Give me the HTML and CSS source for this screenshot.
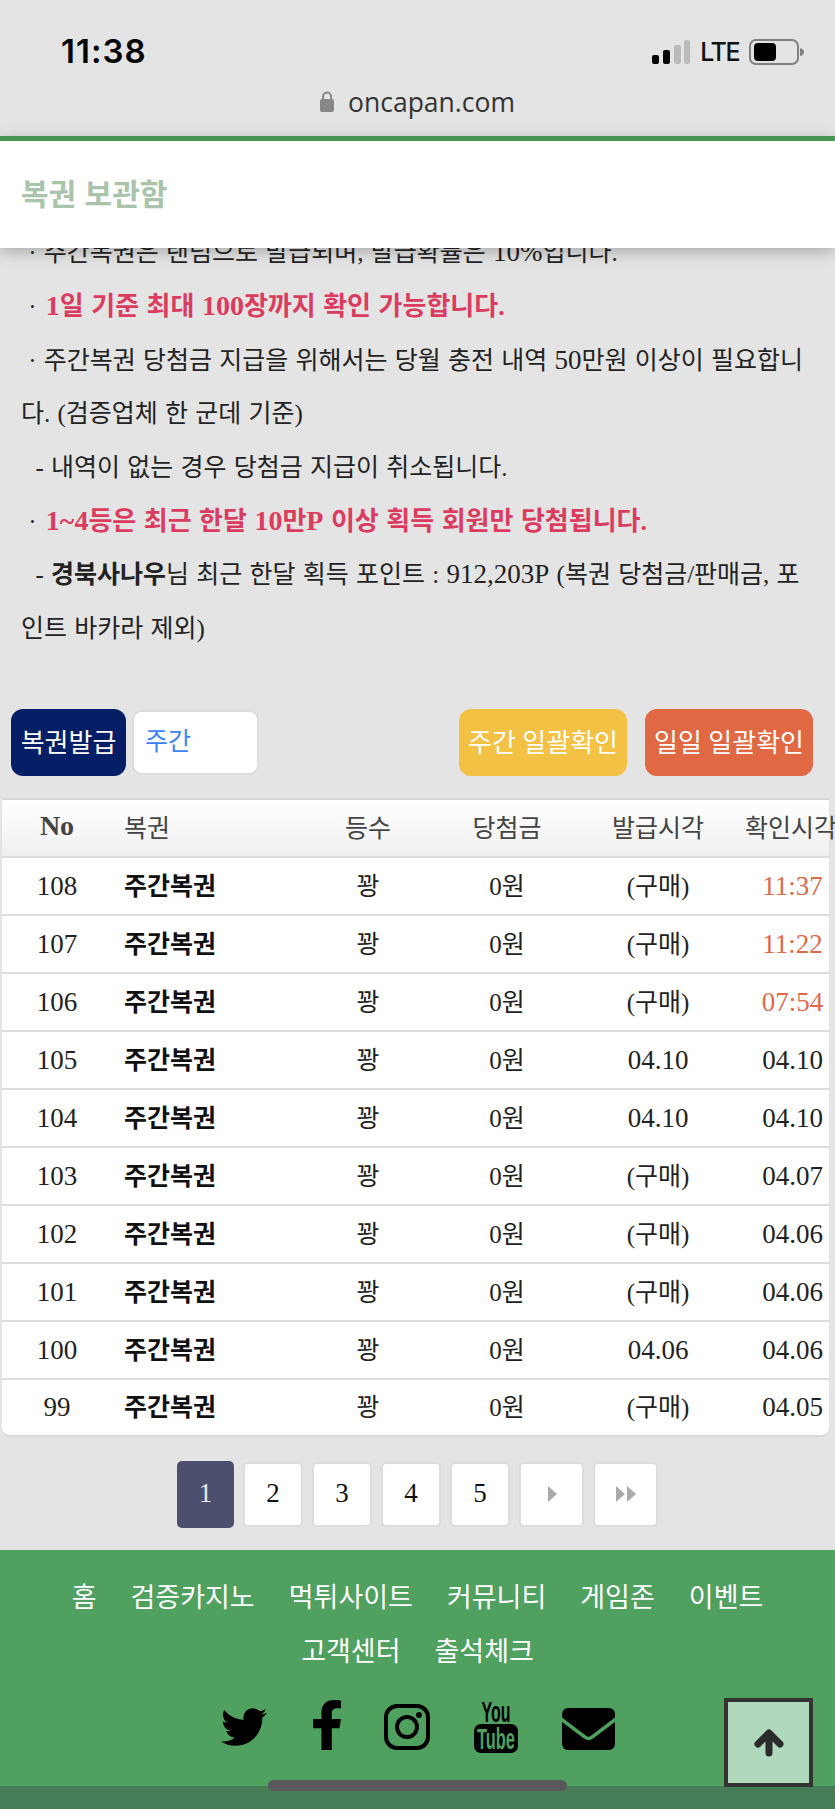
FILE: index.html
```html
<!DOCTYPE html>
<html lang="ko">
    <head>
        <meta charset="UTF-8">
        <meta name="viewport" content="width=device-width, initial-scale=1.0">
        <title>복권 보관함</title>
        <link rel="stylesheet" href="styles.css">
    </head>
    <body>
        <div class="status-bar">
            <span class="clock">11:38</span>
            <div class="status-right">
                <svg class="signal" width="38" height="24" viewBox="0 0 38 24">
                    <rect x="0" y="15" width="7" height="9" rx="2" fill="#000"/>
                    <rect x="11" y="10" width="7" height="14" rx="2" fill="#000"/>
                    <rect x="22" y="5" width="7" height="19" rx="2" fill="#bbb"/>
                    <rect x="32" y="0" width="6" height="24" rx="2" fill="#bbb"/>
                </svg>
                <span class="lte">LTE</span>
                <svg class="battery" width="56" height="26" viewBox="0 0 56 26">
                    <rect x="1" y="1" width="48" height="24" rx="6" fill="none" stroke="#808080" stroke-width="2"/>
                    <rect x="5" y="4" width="22" height="18" rx="4" fill="#000"/>
                    <path d="M51 9 q4 1 4 4 q0 3 -4 4z" fill="#808080"/>
                </svg>
            </div>
        </div>
        <div class="address-bar">
            <svg width="14" height="21" viewBox="0 0 14 21">
                <path d="M3 9V5.5a4 4 0 0 1 8 0V9" fill="none" stroke="#888" stroke-width="2"/>
                <rect x="0" y="8" width="14" height="13" rx="2" fill="#888"/>
            </svg>
            <span>oncapan.com</span>
        </div>

        <header class="top-header">복권 보관함</header>

        <div class="notice">
            <p>&nbsp;· 주간복권은 랜덤으로 발급되며, 발급확률은 <span class="num">10%</span>입니다.</p>
            <p>&nbsp;· <b class="red"><span class="num">1</span>일 기준 최대 <span class="num">100</span>장까지 확인 가능합니다.</b></p>
            <p>&nbsp;· 주간복권 당첨금 지급을 위해서는 당월 충전 내역 <span class="num">50</span>만원 이상이 필요합니다. (검증업체 한 군데 기준)</p>
            <p>&nbsp;&nbsp;- 내역이 없는 경우 당첨금 지급이 취소됩니다.</p>
            <p>&nbsp;· <b class="red"><span class="num">1~4</span>등은 최근 한달 <span class="num">10</span>만<span class="num">P</span> 이상 획득 회원만 당첨됩니다.</b></p>
            <p>&nbsp;&nbsp;- <b>경북사나우</b>님 최근 한달 획득 포인트 : <span class="num">912,203P</span> (복권 당첨금/판매금, 포인트 바카라 제외)</p>
        </div>

        <div class="toolbar">
            <button class="btn btn-navy">복권발급</button>
            <div class="select-box">주간</div>
            <button class="btn btn-yellow push">주간 일괄확인</button>
            <button class="btn btn-orange">일일 일괄확인</button>
        </div>

        <div class="table-wrap">
            <table class="ticket-table">
                <colgroup>
                    <col class="c-no"><col class="c-name"><col class="c-rank"><col class="c-prize"><col class="c-issue"><col class="c-check">
                </colgroup>
                <thead>
                    <tr><th class="no">No</th><th class="name">복권</th><th>등수</th><th>당첨금</th><th>발급시각</th><th class="check">확인시각</th></tr>
                </thead>
                <tbody>
                    <tr><td class="num">108</td><td class="name">주간복권</td><td>꽝</td><td>0원</td><td>(구매)</td><td class="check num today">11:37</td></tr>
                    <tr><td class="num">107</td><td class="name">주간복권</td><td>꽝</td><td>0원</td><td>(구매)</td><td class="check num today">11:22</td></tr>
                    <tr><td class="num">106</td><td class="name">주간복권</td><td>꽝</td><td>0원</td><td>(구매)</td><td class="check num today">07:54</td></tr>
                    <tr><td class="num">105</td><td class="name">주간복권</td><td>꽝</td><td>0원</td><td class="num">04.10</td><td class="check num">04.10</td></tr>
                    <tr><td class="num">104</td><td class="name">주간복권</td><td>꽝</td><td>0원</td><td class="num">04.10</td><td class="check num">04.10</td></tr>
                    <tr><td class="num">103</td><td class="name">주간복권</td><td>꽝</td><td>0원</td><td>(구매)</td><td class="check num">04.07</td></tr>
                    <tr><td class="num">102</td><td class="name">주간복권</td><td>꽝</td><td>0원</td><td>(구매)</td><td class="check num">04.06</td></tr>
                    <tr><td class="num">101</td><td class="name">주간복권</td><td>꽝</td><td>0원</td><td>(구매)</td><td class="check num">04.06</td></tr>
                    <tr><td class="num">100</td><td class="name">주간복권</td><td>꽝</td><td>0원</td><td class="num">04.06</td><td class="check num">04.06</td></tr>
                    <tr><td class="num">99</td><td class="name">주간복권</td><td>꽝</td><td>0원</td><td>(구매)</td><td class="check num">04.05</td></tr>
                </tbody>
            </table>
        </div>

        <div class="pagination">
            <a class="page active">1</a>
            <a class="page">2</a>
            <a class="page">3</a>
            <a class="page">4</a>
            <a class="page">5</a>
            <a class="page wide">
                <svg width="12" height="16" viewBox="0 0 12 16"><path d="M2 0l9 8-9 8z" fill="#aaa"/></svg>
            </a>
            <a class="page wide">
                <svg width="22" height="16" viewBox="0 0 22 16"><path d="M1 0l9 8-9 8zM12 0l9 8-9 8z" fill="#aaa"/></svg>
            </a>
        </div>

        <footer class="footer">
            <nav class="foot-nav">
                <a>홈</a><a>검증카지노</a><a>먹튀사이트</a><a>커뮤니티</a><a>게임존</a><a>이벤트</a><a>고객센터</a><a>출석체크</a>
            </nav>
            <div class="social">
                <svg class="ic-twitter" width="46" height="46" viewBox="0 0 512 512"><path d="M459.37 151.716c.325 4.548.325 9.097.325 13.645 0 138.72-105.583 298.558-298.558 298.558-59.452 0-114.68-17.219-161.137-47.106 8.447.974 16.568 1.299 25.34 1.299 49.055 0 94.213-16.568 130.274-44.832-46.132-.975-84.792-31.188-98.112-72.772 6.498.974 12.995 1.624 19.818 1.624 9.421 0 18.843-1.3 27.614-3.573-48.081-9.747-84.143-51.98-84.143-102.985v-1.299c13.969 7.797 30.214 12.67 47.431 13.319-28.264-18.843-46.781-51.005-46.781-87.391 0-19.492 5.197-37.36 14.294-52.954 51.655 63.675 129.3 105.258 216.365 109.807-1.624-7.797-2.599-15.918-2.599-24.04 0-57.828 46.782-104.934 104.934-104.934 30.213 0 57.502 12.67 76.67 33.137 23.715-4.548 46.456-13.32 66.599-25.34-7.798 24.366-24.366 44.833-46.132 57.827 21.117-2.273 41.584-8.122 60.426-16.243-14.292 20.791-32.161 39.308-52.628 54.253z"/></svg>
                <svg class="ic-facebook" width="28" height="50" viewBox="22 0 272 512" preserveAspectRatio="none"><path d="M279.14 288l14.22-92.66h-88.91v-60.13c0-25.35 12.42-50.06 52.24-50.06h40.42V6.26S260.43 0 225.36 0c-73.22 0-121.08 44.38-121.08 124.72v70.62H22.89V288h81.39v224h100.17V288z"/></svg>
                <svg class="ic-insta" width="46" height="46" viewBox="0 0 46 46">
                    <rect x="2" y="2" width="42" height="42" rx="11" fill="none" stroke="#000" stroke-width="4"/>
                    <circle cx="23" cy="23" r="10" fill="none" stroke="#000" stroke-width="4"/>
                    <circle cx="35" cy="11" r="3" fill="#000"/>
                </svg>
                <svg class="ic-youtube" width="44" height="53" viewBox="0 0 44 53">
                    <text class="yt-you" x="22" y="22" text-anchor="middle" textLength="29" lengthAdjust="spacingAndGlyphs">You</text>
                    <rect x="0" y="24" width="44" height="29" rx="7" fill="#000"/>
                    <text class="yt-tube" x="22" y="49" text-anchor="middle" textLength="38" lengthAdjust="spacingAndGlyphs">Tube</text>
                </svg>
                <svg class="ic-mail" width="53" height="42" viewBox="0 0 53 42">
                    <rect x="0" y="0" width="53" height="42" rx="6" fill="#000"/>
                    <path d="M-1 11 L23 29 Q26.5 32 30 29 L54 11" fill="none" stroke="#50a060" stroke-width="3.5"/>
                </svg>
            </div>
            <div class="foot-dark"></div>
        </footer>

        <a class="to-top">
            <svg width="30" height="28" viewBox="0 0 30 28"><path d="M15 4L4 15M15 4l11 11M15 5v19" fill="none" stroke="#2b2b2b" stroke-width="7" stroke-linecap="round" stroke-linejoin="round"/></svg>
        </a>
        <div class="home-bar"></div>
    </body>
</html>
```

FILE: styles.css
```css
* {
    box-sizing: border-box;
}
html, body {
    margin: 0;
    padding: 0;
}
body {
    position: relative;
    height: 1809px;
    overflow: hidden;
    background-color: #e4e4e4;
    color: #222;
    font-family: "Liberation Serif", "Noto Sans CJK KR", serif;
    font-size: 25px;
}
.num {
    font-size: 27px;
}

/* phone top */
.status-bar {
    height: 76px;
    padding: 34px 30px 0 61px;
    display: flex;
    justify-content: space-between;
    align-items: flex-start;
}
.clock {
    font-family: Inter, "Liberation Sans", sans-serif;
    font-size: 33px;
    font-weight: 600;
    line-height: 34px;
    color: #000;
    letter-spacing: 1px;
}
.status-right {
    display: flex;
    align-items: center;
    margin-top: 5px;
}
.lte {
    font-family: Inter, "Liberation Sans", sans-serif;
    font-size: 25px;
    font-weight: 500;
    line-height: 24px;
    letter-spacing: -1.5px;
    color: #111;
    margin: 0 10px;
}
.address-bar {
    height: 60px;
    padding-bottom: 9px;
    display: flex;
    justify-content: center;
    align-items: center;
    gap: 14px;
    font-family: "Open Sans", "Liberation Sans", sans-serif;
    font-size: 26.5px;
    color: #333;
}

.top-header {
    position: relative;
    z-index: 2;
    height: 112px;
    padding: 0 21px 5px;
    display: flex;
    align-items: center;
    background-color: #fff;
    border-top: 5px solid #46954f;
    box-shadow: 0 4px 14px rgba(0, 0, 0, 0.25);
    color: #a9c4ab;
    font-family: "Noto Sans CJK KR", sans-serif;
    font-size: 30px;
    font-weight: 700;
}

.notice {
    margin-top: -22px;
    padding: 0 20px 0 21px;
    line-height: 53.4px;
    word-spacing: 1px;
}
.notice p {
    margin: 0;
}
.red {
    margin-left: 2px;
    font-size: 26px;
    color: #dc3b60;
}
.red .num {
    font-size: 28px;
}

.toolbar {
    margin-top: 54px;
    padding: 0 22px 0 11px;
    display: flex;
    align-items: center;
}
.btn {
    height: 67px;
    border: none;
    border-radius: 12px;
    color: #fff;
    font-family: inherit;
    font-size: 26px;
    padding: 0 0 4px;
}
.btn-navy {
    width: 115px;
    background-color: #061e66;
}
.btn-yellow {
    width: 168px;
    background-color: #f3c144;
}
.btn-orange {
    width: 168px;
    margin-left: 18px;
    background-color: #e06843;
}
.push {
    margin-left: auto;
}
.select-box {
    width: 127px;
    height: 65px;
    margin-left: 6px;
    padding: 0 0 7px 11px;
    display: flex;
    align-items: center;
    background-color: #fff;
    border: 2px solid #ddd;
    border-radius: 10px;
    color: #3b82f6;
}

/* table */
.table-wrap {
    margin: 22px 6px 0 2px;
    background-color: #fff;
    border-top: 2px solid #d8d8d8;
    border-bottom: 2px solid #d8d8d8;
    border-radius: 0 0 8px 8px;
}
.ticket-table {
    width: 827px;
    table-layout: fixed;
    border-collapse: collapse;
    white-space: nowrap;
}
.c-no { width: 110px; }
.c-name { width: 198px; }
.c-rank { width: 116px; }
.c-prize { width: 162px; }
.c-issue { width: 140px; }
.c-check { width: 101px; }
.ticket-table th, .ticket-table td {
    height: 58px;
    padding: 0 0 5px;
    text-align: center;
    font-weight: normal;
    border-bottom: 2px solid #ddd;
}
.ticket-table td.num {
    padding-bottom: 0;
}
.ticket-table tbody tr:last-child td {
    height: 56px;
    border-bottom: none;
}
.ticket-table th {
    height: 57px;
    font-size: 25px;
    color: #444;
    background: linear-gradient(#fff, #f0f0f0);
}
.ticket-table th.no {
    font-size: 28px;
    font-weight: bold;
}
.ticket-table .name {
    text-align: left;
    padding-left: 12px;
}
.ticket-table td.name {
    font-weight: bold;
    color: #111;
}
.ticket-table td.check {
    padding-left: 28px;
}
.ticket-table th.check {
    text-align: left;
    padding-left: 17px;
    overflow: visible;
}
.ticket-table td.today {
    color: #e0694a;
}

.pagination {
    margin-top: 24px;
    padding-left: 177px;
    height: 67px;
    display: flex;
    align-items: center;
    gap: 9px;
    font-size: 27px;
}
.page {
    width: 60px;
    height: 65px;
    padding-bottom: 2px;
    display: flex;
    justify-content: center;
    align-items: center;
    background-color: #fff;
    border: 2px solid #ddd;
    border-radius: 5px;
    color: #111;
}
.page.active {
    width: 57px;
    height: 67px;
    background-color: #4c4f6e;
    border: none;
    color: #e8e8f0;
}
.page.wide {
    width: 65px;
}

/* footer */
.footer {
    margin-top: 22px;
    height: 260px;
    display: flex;
    flex-direction: column;
    background-color: #50a060;
}
.foot-nav {
    padding: 19px 50px 0;
    display: flex;
    flex-wrap: wrap;
    justify-content: center;
    gap: 0 34px;
    font-family: "Noto Sans CJK KR", sans-serif;
    font-size: 27px;
    line-height: 54px;
    color: #fff;
}
.social {
    margin-top: 17px;
    padding-left: 221px;
    height: 56px;
    display: flex;
    align-items: flex-end;
    gap: 44px;
}
.ic-facebook {
    margin: 0 -1px 0 2px;
}
.ic-youtube {
    margin-bottom: -3px;
    overflow: visible;
}
.yt-you {
    font-family: "Liberation Sans", sans-serif;
    font-size: 29px;
    font-weight: bold;
}
.yt-tube {
    font-family: "Liberation Sans", sans-serif;
    font-size: 29px;
    font-weight: bold;
    fill: #50a060;
}
.foot-dark {
    margin-top: auto;
    height: 24px;
    background-color: #477d56;
}

/* over the content */
.to-top {
    position: absolute;
    left: 724px;
    top: 1698px;
    width: 89px;
    height: 89px;
    display: flex;
    justify-content: center;
    align-items: center;
    background-color: #b0d8bc;
    border: 4px solid #333;
}
.home-bar {
    position: absolute;
    left: 268px;
    top: 1780px;
    width: 299px;
    height: 11px;
    border-radius: 6px;
    background-color: #595959;
}
```
